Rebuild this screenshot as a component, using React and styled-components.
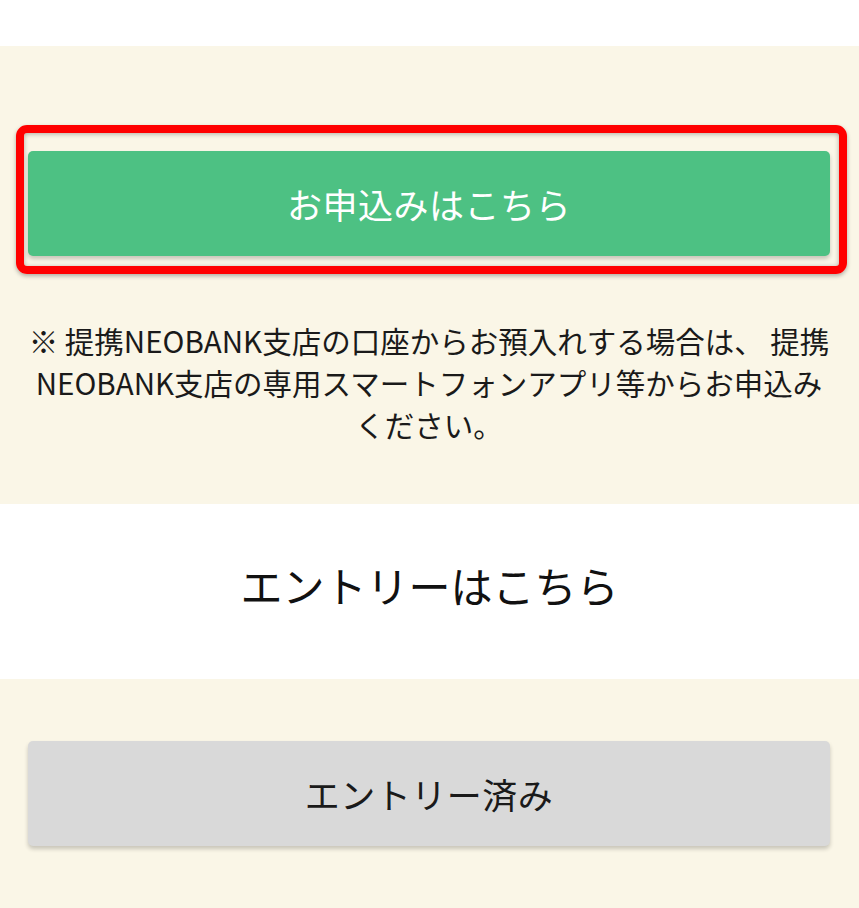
import React from "react";
import styled, { createGlobalStyle } from "styled-components";

const GlobalStyle = createGlobalStyle`
  html, body {
    margin: 0;
    padding: 0;
    background: #ffffff;
  }
  body {
    font-family: "Noto Sans CJK JP", "Noto Sans", sans-serif;
    color: #1a1a1a;
  }
`;

const TopSpacer = styled.div`
  height: 46px;
  background: #ffffff;
`;

const Section = styled.section`
  background: ${(props) => (props.tone === "beige" ? "#faf6e7" : "#ffffff")};
  padding: ${(props) => props.pad};
`;

const ActionButton = styled.button`
  position: relative;
  display: flex;
  align-items: center;
  justify-content: center;
  width: 100%;
  height: 105px;
  border: none;
  border-radius: 5px;
  font-family: "Noto Sans CJK JP", sans-serif;
  font-size: 35px;
  letter-spacing: 0.5px;
  color: ${(props) => (props.variant === "done" ? "#1a1a1a" : "#ffffff")};
  background: ${(props) => (props.variant === "done" ? "#d9d9d9" : "#4dc183")};
  box-shadow: 0 3px 4px rgba(0, 0, 0, 0.2);
  cursor: pointer;
`;

/* red annotation frame drawn over the apply button */
const Highlight = styled.span`
  position: absolute;
  top: -26px;
  left: -12px;
  right: -17px;
  bottom: -18px;
  border: 8px solid #ff0000;
  border-radius: 11px;
  box-shadow: 0 2px 4px rgba(0, 0, 0, 0.3), inset 0 1px 5px rgba(0, 0, 0, 0.3);
  pointer-events: none;
`;

const Note = styled.p`
  margin: 63px 0 0;
  font-size: 29.5px;
  line-height: 42px;
  text-align: center;
  color: #1a1a1a;
`;

const Heading = styled.h2`
  margin: 0;
  font-family: "Noto Sans CJK JP", sans-serif;
  font-weight: 400;
  font-size: 42px;
  line-height: 60px;
  text-align: center;
  color: #111111;
`;

export default function App() {
  return (
    <>
      <GlobalStyle />
      <TopSpacer />
      <Section tone="beige" pad="105px 29px 59px 28px">
        <ActionButton>
          お申込みはこちら
          <Highlight />
        </ActionButton>
        <Note>
          ※ 提携NEOBANK支店の口座からお預入れする場合は、 提携
          <br />
          NEOBANK支店の専用スマートフォンアプリ等からお申込み
          <br />
          ください。
        </Note>
      </Section>
      <Section tone="white" pad="51px 0 64px">
        <Heading>エントリーはこちら</Heading>
      </Section>
      <Section tone="beige" pad="62px 29px 62px 28px">
        <ActionButton variant="done">エントリー済み</ActionButton>
      </Section>
    </>
  );
}
